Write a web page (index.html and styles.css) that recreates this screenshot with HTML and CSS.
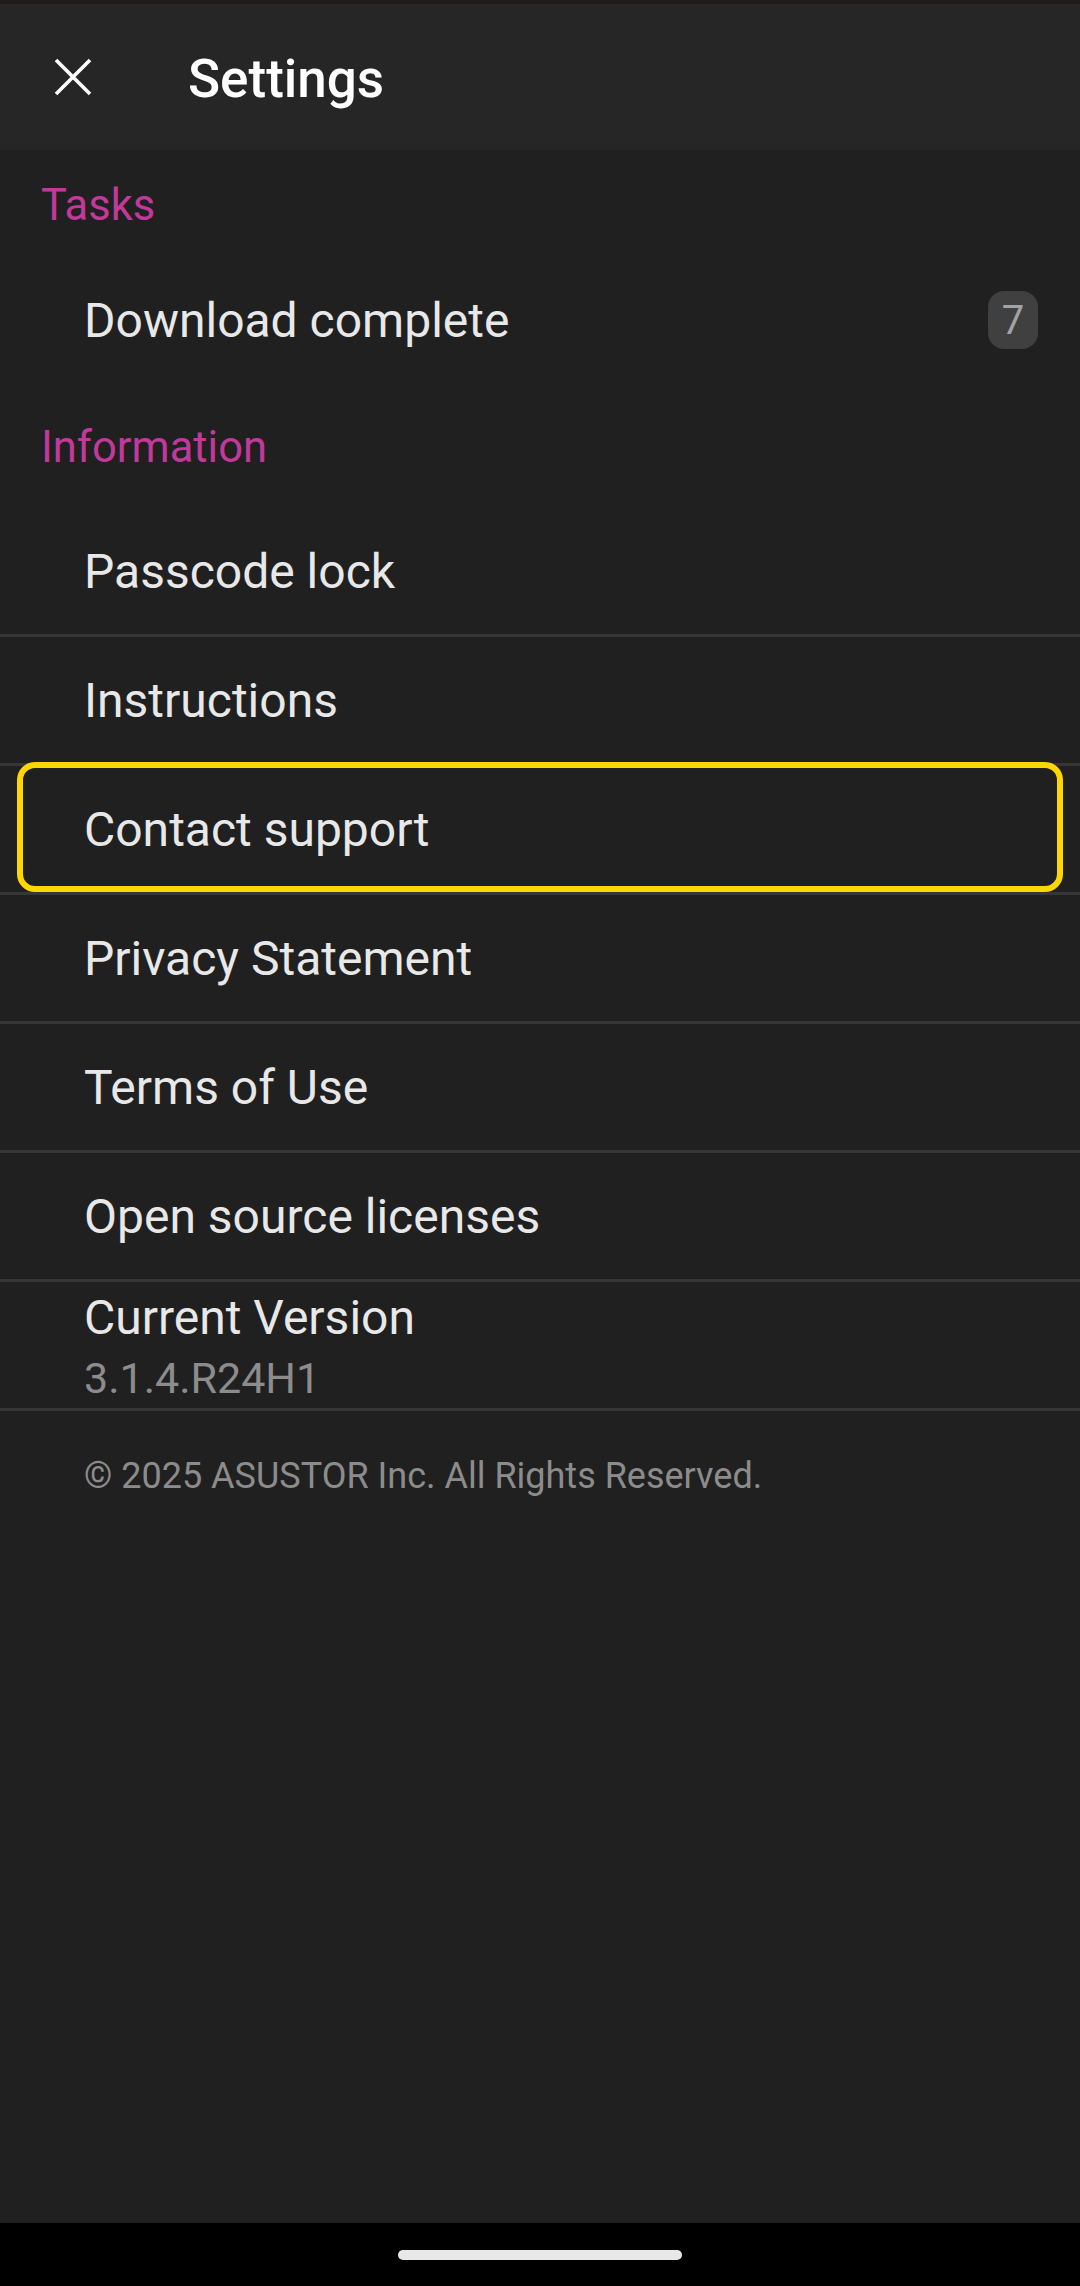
FILE: index.html
```html
<!DOCTYPE html>
<html lang="en">
<head>
    <meta charset="UTF-8">
    <meta name="viewport" content="width=device-width, initial-scale=1.0">
    <title>Settings</title>
    <link rel="stylesheet" href="styles.css">
</head>
<body>

    <div class="status-strip"></div>

    <header class="toolbar">
        <button class="close-btn" aria-label="Close">
            <svg width="38" height="38" viewBox="0 0 38 38">
                <path d="M2 2 L36 36 M36 2 L2 36" stroke="#ffffff" stroke-width="3.6" fill="none"/>
            </svg>
        </button>
        <h1>Settings</h1>
    </header>

    <main class="settings">
        <div class="section-title tasks">Tasks</div>
        <div class="row no-divider">
            <span>Download complete</span>
            <span class="badge">7</span>
        </div>

        <div class="section-title info">Information</div>
        <div class="row">Passcode lock</div>
        <div class="row">Instructions</div>
        <div class="row focused">Contact support</div>
        <div class="row">Privacy Statement</div>
        <div class="row">Terms of Use</div>
        <div class="row">Open source licenses</div>
        <div class="row version">
            <span class="label">Current Version</span>
            <span class="sub">3.1.4.R24H1</span>
        </div>

        <p class="copyright">&copy; 2025 ASUSTOR Inc. All Rights Reserved.</p>
    </main>

    <div class="nav-bar">
        <div class="handle"></div>
    </div>

</body>
</html>
```

FILE: styles.css
```css
html, body {
    margin: 0;
    padding: 0;
}
body {
    width: 1080px;
    height: 2286px;
    background-color: #202020;
    font-family: Roboto, "Noto Sans", sans-serif;
    color: #e8e8e8;
    display: flex;
    flex-direction: column;
    overflow: hidden;
}
.status-strip {
    height: 4px;
    background-color: #201d19;
}
.toolbar {
    height: 146px;
    background-color: #262626;
    display: flex;
    align-items: center;
}
.close-btn {
    width: 38px;
    height: 38px;
    margin-left: 54px;
    padding: 0;
    border: none;
    background: none;
    display: flex;
}
.toolbar h1 {
    margin: 0 0 0 96px;
    font-size: 53px;
    font-weight: 500;
    color: #ffffff;
    padding-top: 3px;
}
.settings {
    flex: 1;
    display: flex;
    flex-direction: column;
}
.section-title {
    color: #c2399b;
    font-size: 43.5px;
    padding-left: 41px;
    padding-top: 3px;
    box-sizing: border-box;
    display: flex;
    align-items: center;
}
.section-title.tasks {
    height: 107px;
}
.section-title.info {
    height: 125px;
}
.row {
    position: relative;
    height: 126px;
    border-bottom: 3px solid #363636;
    padding: 0 42px 0 84px;
    font-size: 48px;
    display: flex;
    align-items: center;
    justify-content: space-between;
}
.row.no-divider {
    border-bottom: none;
}
.badge {
    width: 50px;
    height: 58px;
    border-radius: 16px;
    background-color: #404040;
    color: #a3a3a3;
    font-size: 40px;
    display: flex;
    align-items: center;
    justify-content: center;
}
.row.focused::after {
    content: "";
    position: absolute;
    left: 17px;
    right: 17px;
    top: -4px;
    bottom: 0;
    border: 6px solid #ffd700;
    border-radius: 18px;
}
.row.version {
    flex-direction: column;
    align-items: flex-start;
    justify-content: center;
}
.version .label {
    line-height: 62px;
    margin-top: 4px;
}
.version .sub {
    font-size: 43px;
    color: #8c8c8c;
    line-height: 58px;
}
.copyright {
    margin: 44px 0 0 84px;
    font-size: 36px;
    color: #8c8c8c;
}
.nav-bar {
    height: 63px;
    background-color: #000000;
    display: flex;
    justify-content: center;
    padding-top: 27px;
    box-sizing: border-box;
}
.handle {
    width: 284px;
    height: 10px;
    border-radius: 5px;
    background-color: #e8e8e8;
}
```
